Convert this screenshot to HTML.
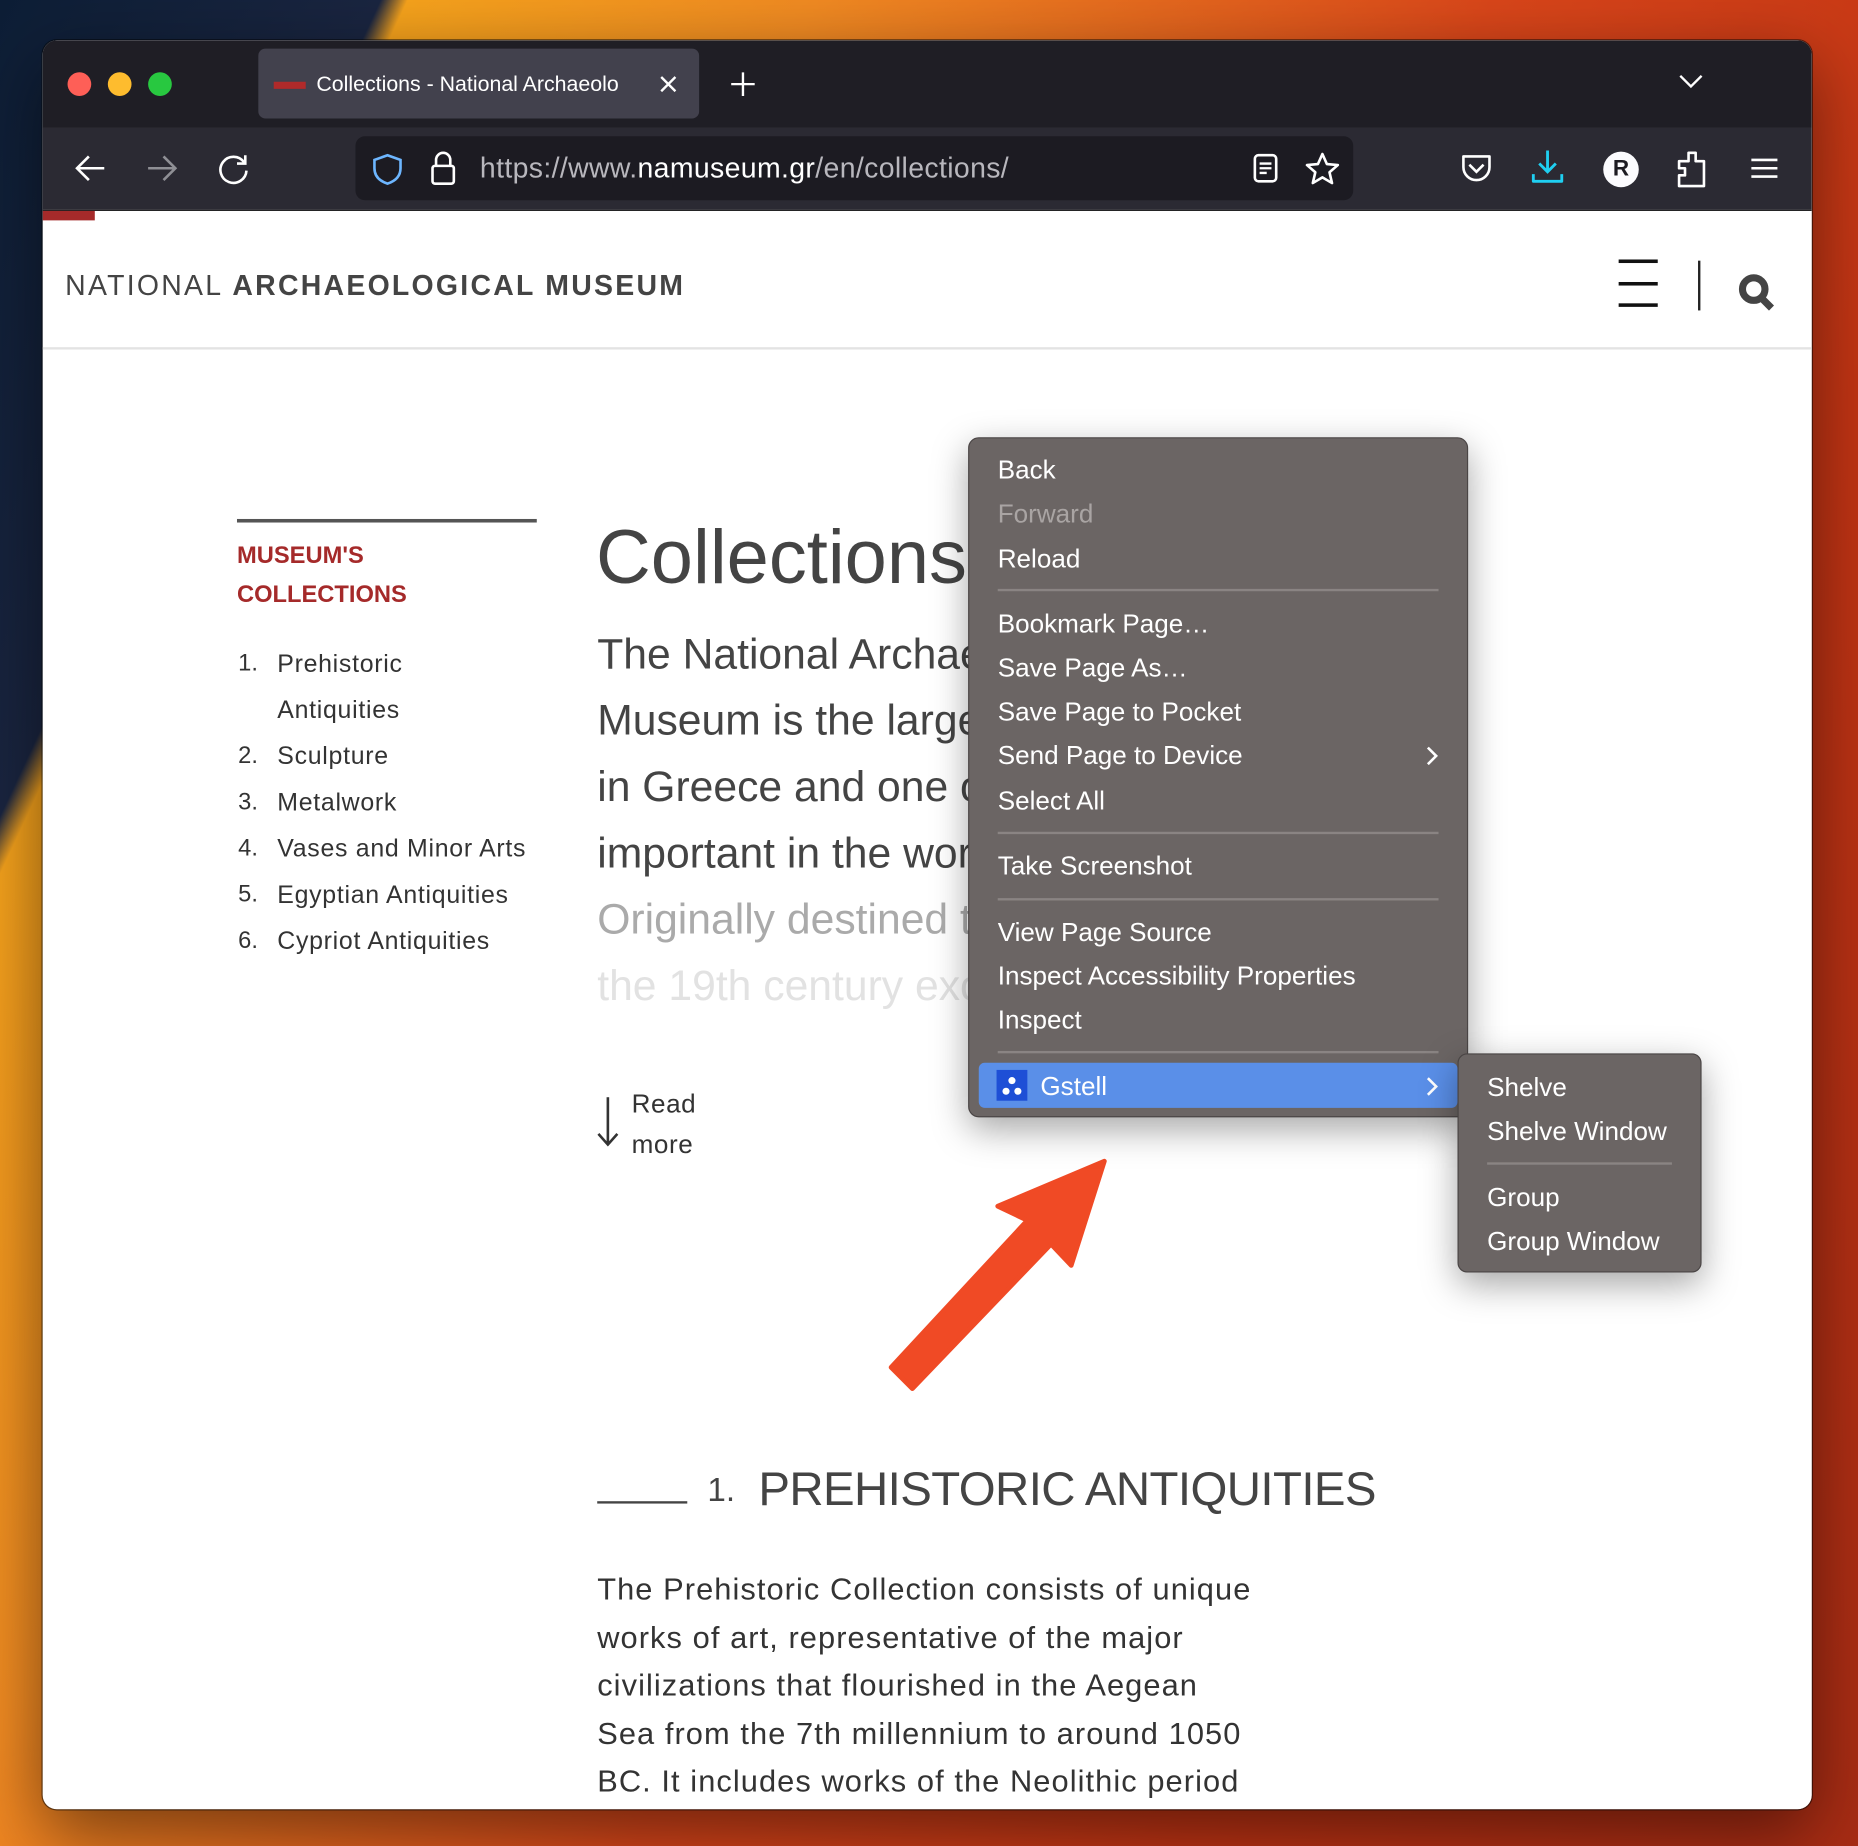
<!DOCTYPE html>
<html><head><meta charset="utf-8"><style>
html,body{margin:0;padding:0;width:1858px;height:1846px;overflow:hidden;}
#w{position:absolute;left:0;top:0;width:1568px;height:1558px;transform:scale(1.18495,1.18485);transform-origin:0 0;
background:linear-gradient(115deg,#0d1e36 0%,#1a2540 14%,#f5a21c 15%,#f08a22 30%,#d9461a 55%,#c23414 75%,#a82c14 100%);overflow:hidden;font-family:"Liberation Sans",sans-serif;}
.abs{position:absolute;}
#win{position:absolute;left:36px;top:34px;width:1493px;height:1493px;border-radius:12px;overflow:hidden;background:#fff;box-shadow:0 0 0 1px rgba(0,0,0,.5),0 20px 60px rgba(0,0,0,.5);}
.t{position:absolute;white-space:nowrap;}
.mi{position:absolute;left:24px;color:#fff;font-size:22px;white-space:nowrap;}
.sep{position:absolute;left:24px;right:24px;height:2px;background:#8a8483;}
</style></head><body><div id="w">
<div id="win">
 <div class="abs" style="left:0;top:0;width:1493px;height:74px;background:#1f1e25"></div>
 <div class="abs" style="left:21px;top:27px;width:20px;height:20px;border-radius:50%;background:#fe5f57"></div>
 <div class="abs" style="left:55px;top:27px;width:20px;height:20px;border-radius:50%;background:#febc2e"></div>
 <div class="abs" style="left:89px;top:27px;width:20px;height:20px;border-radius:50%;background:#28c840"></div>
 <div class="abs" style="left:182px;top:7px;width:372px;height:59px;border-radius:6px;background:#42414d"></div>
 <div class="abs" style="left:195px;top:35px;width:27px;height:6px;background:#b02a2a"></div>
 <div class="t" style="left:231px;top:27px;font-size:18px;color:#fff;width:285px;overflow:hidden">Collections - National Archaeolo</div>
 <svg class="abs" style="left:520px;top:29px" width="16" height="16"><path d="M2 2L14 14M14 2L2 14" stroke="#fff" stroke-width="2"/></svg>
 <svg class="abs" style="left:581px;top:27px" width="20" height="20"><path d="M10 0V20M0 10H20" stroke="#fff" stroke-width="2"/></svg>
 <svg class="abs" style="left:1381px;top:29px" width="20" height="12"><path d="M1 1L10 10L19 1" stroke="#fff" stroke-width="2" fill="none"/></svg>
 <div class="abs" style="left:0;top:74px;width:1493px;height:69px;background:#2b2a33"></div>
 <svg class="abs" style="left:26px;top:96px" width="28" height="24"><path d="M26 12H3M13 2L3 12L13 22" stroke="#fff" stroke-width="2.2" fill="none"/></svg>
 <svg class="abs" style="left:87px;top:96px" width="28" height="24"><path d="M2 12H25M15 2L25 12L15 22" stroke="#8f8f95" stroke-width="2.2" fill="none"/></svg>
 <svg class="abs" style="left:148px;top:95px" width="28" height="28"><path d="M22 8A11 11 0 1 0 24 15" stroke="#fff" stroke-width="2.2" fill="none"/><path d="M23 2V9H16" stroke="#fff" stroke-width="2.2" fill="none"/></svg>
 <div class="abs" style="left:264px;top:81px;width:842px;height:54px;border-radius:8px;background:#1c1b22"></div>
 <svg class="abs" style="left:278px;top:95px" width="26" height="28"><path d="M13 2L24 6V13C24 20 19 24 13 26C7 24 2 20 2 13V6Z" stroke="#6db6ff" stroke-width="2.2" fill="none"/></svg>
 <svg class="abs" style="left:327px;top:93px" width="22" height="30"><path d="M5 13V8A6 6 0 0 1 17 8V13" stroke="#fff" stroke-width="2.2" fill="none"/><rect x="2" y="13" width="18" height="15" rx="2" stroke="#fff" stroke-width="2.2" fill="none"/></svg>
 <div class="t" style="left:369px;top:95px;font-size:24px;color:#b8b7bd;letter-spacing:0.3px">https://www.<span style="color:#fff">namuseum.gr</span>/en/collections/</div>
 <svg class="abs" style="left:1021px;top:95px" width="22" height="26"><rect x="2" y="2" width="18" height="22" rx="3" stroke="#fff" stroke-width="2.2" fill="none"/><path d="M6 9H16M6 13H16M6 17H12" stroke="#fff" stroke-width="2"/></svg>
 <svg class="abs" style="left:1065px;top:94px" width="30" height="28"><path d="M15 2L18.8 10.5L28 11.3L21 17.4L23.1 26.5L15 21.7L6.9 26.5L9 17.4L2 11.3L11.2 10.5Z" stroke="#fff" stroke-width="2.2" fill="none" stroke-linejoin="round"/></svg>
 <svg class="abs" style="left:1196px;top:95px" width="28" height="26"><path d="M3 3H25V12A11 11 0 0 1 3 12Z" stroke="#fff" stroke-width="2.2" fill="none" stroke-linejoin="round"/><path d="M8 10L14 16L20 10" stroke="#fff" stroke-width="2.2" fill="none"/></svg>
 <svg class="abs" style="left:1256px;top:91px" width="28" height="32"><path d="M14 2V20M7 13L14 20L21 13" stroke="#1fcff1" stroke-width="2.4" fill="none"/><path d="M2 22V28H26V22" stroke="#1fcff1" stroke-width="2.4" fill="none" stroke-linejoin="round"/></svg>
 <div class="abs" style="left:1317px;top:94px;width:30px;height:30px;border-radius:50%;background:#fbfbfe;color:#1c1b22;font-weight:bold;font-size:19px;text-align:center;line-height:30px">R</div>
 <svg class="abs" style="left:1378px;top:92px" width="28" height="34"><path d="M11 3H17V10H24V31H3V22H8V16H3V10H11Z" stroke="#fff" stroke-width="2.2" fill="none" stroke-linejoin="round"/></svg>
 <svg class="abs" style="left:1441px;top:98px" width="24" height="20"><path d="M1 3H23M1 10H23M1 17H23" stroke="#fff" stroke-width="2.2"/></svg>
 <div class="abs" style="left:0;top:143px;width:1493px;height:1px;background:#0c0c0d"></div>
 <div class="abs" style="left:0;top:144px;width:44px;height:8px;background:#a52a2a"></div>
 <div class="t" style="left:19px;top:194px;font-size:24px;color:#444;letter-spacing:1.9px">NATIONAL <b>ARCHAEOLOGICAL MUSEUM</b></div>
 <div class="abs" style="left:1330px;top:185px;width:33px;height:3px;background:#111"></div>
 <div class="abs" style="left:1330px;top:204px;width:33px;height:3px;background:#111"></div>
 <div class="abs" style="left:1330px;top:222px;width:33px;height:3px;background:#111"></div>
 <div class="abs" style="left:1397px;top:186px;width:2px;height:42px;background:#222"></div>
 <svg class="abs" style="left:1431px;top:197px" width="32" height="32"><circle cx="13" cy="13" r="9.5" stroke="#444" stroke-width="6" fill="none"/><path d="M19 20L28 29" stroke="#444" stroke-width="6"/></svg>
 <div class="abs" style="left:0;top:259px;width:1493px;height:2px;background:#e3e3e3"></div>

 <div class="abs" style="left:164px;top:404px;width:253px;height:3px;background:#555"></div>
 <div class="t" style="left:164px;top:419px;font-size:20px;color:#a52a2a;line-height:33px;font-weight:bold">MUSEUM'S<br>COLLECTIONS</div>
 <div class="t" style="left:165px;top:507px;font-size:20px;color:#333;line-height:39px">1.<br><br>2.<br>3.<br>4.<br>5.<br>6.</div>
 <div class="t" style="left:198px;top:507px;font-size:21px;color:#333;line-height:39px;letter-spacing:0.6px">Prehistoric<br>Antiquities<br>Sculpture<br>Metalwork<br>Vases and Minor Arts<br>Egyptian Antiquities<br>Cypriot Antiquities</div>
 <div class="t" style="left:467px;top:399px;font-size:64px;color:#444">Collections</div>
 <div class="t" style="left:468px;top:490px;font-size:36px;line-height:56px;color:#444">The National Archaeological<br>Museum is the largest<br>in Greece and one of the most<br>important in the world.<br><span style="color:#aaa">Originally destined to host all</span><br><span style="color:#e2e2e2">the 19th century excavations</span></div>
 <svg class="abs" style="left:467px;top:892px" width="20" height="44"><path d="M10 0V40M2 31L10 40L18 31" stroke="#333" stroke-width="2.2" fill="none"/></svg>
 <div class="t" style="left:497px;top:881px;font-size:22px;line-height:34px;color:#333;letter-spacing:0.5px">Read<br>more</div>

 <svg class="abs" style="left:700px;top:940px" width="260" height="260"><path d="M196 6L168 94L151 76L34 198L16 180L131 56L106 44Z" fill="#f04a25" stroke="#f04a25" stroke-width="4" stroke-linejoin="round"/></svg>

 <div class="abs" style="left:468px;top:1233px;width:76px;height:2px;background:#444"></div>
 <div class="t" style="left:561px;top:1208px;font-size:28px;color:#444">1.</div>
 <div class="t" style="left:604px;top:1201px;font-size:40px;color:#444;letter-spacing:-0.5px">PREHISTORIC ANTIQUITIES</div>
 <div class="t" style="left:468px;top:1287px;font-size:26px;line-height:40.5px;color:#333;letter-spacing:0.9px">The Prehistoric Collection consists of unique<br>works of art, representative of the major<br>civilizations that flourished in the Aegean<br>Sea from the 7th millennium to around 1050<br>BC. It includes works of the Neolithic period</div>

 <div class="abs" style="left:781px;top:335px;width:420px;height:572px;background:#6b6564;border:1px solid #4a4545;border-radius:9px;box-shadow:0 10px 30px rgba(0,0,0,.35)">
  <div class="mi" style="top:14px">Back</div>
  <div class="mi" style="top:51px;color:#a9a4a3">Forward</div>
  <div class="mi" style="top:89px">Reload</div>
  <div class="sep" style="top:127px"></div>
  <div class="mi" style="top:144px">Bookmark Page…</div>
  <div class="mi" style="top:181px">Save Page As…</div>
  <div class="mi" style="top:218px">Save Page to Pocket</div>
  <div class="mi" style="top:255px">Send Page to Device</div>
  <svg class="abs" style="left:385px;top:259px" width="12" height="18"><path d="M2 2L9 9L2 16" stroke="#fff" stroke-width="2.2" fill="none"/></svg>
  <div class="mi" style="top:293px">Select All</div>
  <div class="sep" style="top:332px"></div>
  <div class="mi" style="top:348px">Take Screenshot</div>
  <div class="sep" style="top:388px"></div>
  <div class="mi" style="top:404px">View Page Source</div>
  <div class="mi" style="top:441px">Inspect Accessibility Properties</div>
  <div class="mi" style="top:478px">Inspect</div>
  <div class="sep" style="top:517px"></div>
  <div class="abs" style="left:8px;top:527px;width:404px;height:38px;background:#5a8fe8;border-radius:5px"></div>
  <div class="abs" style="left:23px;top:533px;width:26px;height:26px;background:#1e4fd6"></div>
  <div class="abs" style="left:33px;top:539px;width:6px;height:6px;border-radius:50%;background:#fff"></div>
  <div class="abs" style="left:28px;top:548px;width:6px;height:6px;border-radius:50%;background:#fff"></div>
  <div class="abs" style="left:38px;top:548px;width:6px;height:6px;border-radius:50%;background:#fff"></div>
  <div class="mi" style="left:60px;top:534px">Gstell</div>
  <svg class="abs" style="left:385px;top:538px" width="12" height="18"><path d="M2 2L9 9L2 16" stroke="#fff" stroke-width="2.2" fill="none"/></svg>
 </div>
 <div class="abs" style="left:1194px;top:855px;width:204px;height:183px;background:#6b6564;border:1px solid #4a4545;border-radius:8px;box-shadow:0 10px 30px rgba(0,0,0,.35)">
  <div class="mi" style="top:15px">Shelve</div>
  <div class="mi" style="top:52px">Shelve Window</div>
  <div class="sep" style="top:91px"></div>
  <div class="mi" style="top:108px">Group</div>
  <div class="mi" style="top:145px">Group Window</div>
 </div>
</div>
</div></body></html>
